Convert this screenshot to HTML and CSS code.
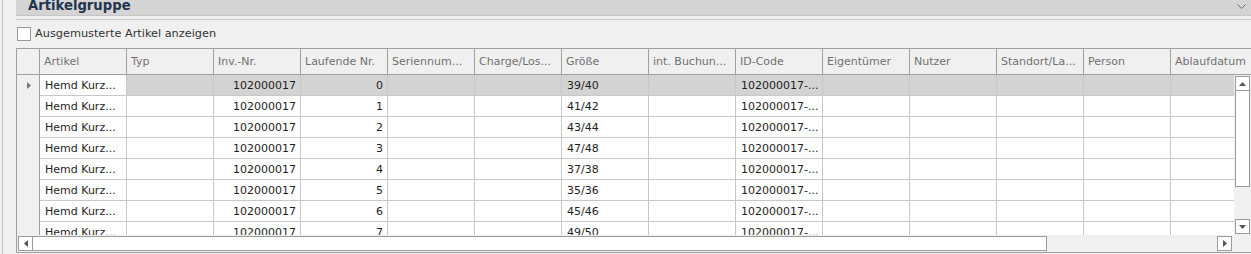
FILE: index.html
```html
<!DOCTYPE html>
<html lang="de">
<head>
  <meta charset="UTF-8" />
  <title>Artikelgruppe</title>
  <link rel="stylesheet" href="styles.css">
</head>
<body>
  <div class="frame">

    <!-- Group header -->
    <div class="group-bar">
      <span class="group-title">Artikelgruppe</span>
      <svg class="chevron" width="9" height="5" viewBox="0 0 9 5"><path d="M0.5 0.5 L4.5 4.5 L8.5 0.5" fill="none" stroke="#6a6a6a" stroke-width="1"/></svg>
    </div>
    <div class="group-line"></div>

    <!-- Filter -->
    <label class="check-row">
      <span class="check-box"></span>
      <span>Ausgemusterte Artikel anzeigen</span>
    </label>

    <!-- Grid -->
    <div class="grid">
      <div class="grid-head">
        <div class="row-head"></div>
        <div class="hcell">Artikel</div>
        <div class="hcell">Typ</div>
        <div class="hcell">Inv.-Nr.</div>
        <div class="hcell">Laufende Nr.</div>
        <div class="hcell">Seriennum...</div>
        <div class="hcell">Charge/Los...</div>
        <div class="hcell">Größe</div>
        <div class="hcell">int. Buchun...</div>
        <div class="hcell">ID-Code</div>
        <div class="hcell">Eigentümer</div>
        <div class="hcell">Nutzer</div>
        <div class="hcell">Standort/La...</div>
        <div class="hcell">Person</div>
        <div class="hcell">Ablaufdatum</div>
      </div>

      <div class="grid-mid">
        <div class="rows" id="rows"></div>
        <div class="vscroll">
          <div class="sbtn"><svg width="7" height="4" viewBox="0 0 7 4"><path d="M0 4 L3.5 0 L7 4 Z" fill="#555"/></svg></div>
          <div class="vthumb"></div>
          <div class="vtrack"></div>
          <div class="sbtn"><svg width="7" height="4" viewBox="0 0 7 4"><path d="M0 0 L3.5 4 L7 0 Z" fill="#555"/></svg></div>
        </div>
      </div>

      <div class="hscroll">
        <div class="sbtn"><svg width="4" height="7" viewBox="0 0 4 7"><path d="M4 0 L0 3.5 L4 7 Z" fill="#555"/></svg></div>
        <div class="hthumb"></div>
        <div class="htrack"></div>
        <div class="sbtn"><svg width="4" height="7" viewBox="0 0 4 7"><path d="M0 0 L4 3.5 L0 7 Z" fill="#555"/></svg></div>
        <div class="corner"></div>
      </div>
    </div>

  </div>

  <script>
    const sizes = ["39/40", "41/42", "43/44", "47/48", "37/38", "35/36", "45/46", "49/50"];
    const rowsEl = document.getElementById("rows");

    sizes.forEach((size, i) => {
      const row = document.createElement("div");
      row.className = "row" + (i === 0 ? " selected" : "");

      const cells = [
        ["Hemd Kurz...", "focus"], ["", ""], ["102000017", "num"], [String(i), "num"],
        ["", ""], ["", ""], [size, ""], ["", ""], ["102000017-...", ""],
        ["", ""], ["", ""], ["", ""], ["", ""], ["", ""]
      ];

      let html = '<div class="row-head">' +
        (i === 0 ? '<svg width="4" height="7" viewBox="0 0 4 7"><path d="M0 0 L4 3.5 L0 7 Z" fill="#777"/></svg>' : '') +
        '</div>';
      cells.forEach(([text, cls]) => {
        html += '<div class="cell ' + cls + '">' + text + '</div>';
      });
      row.innerHTML = html;
      rowsEl.appendChild(row);
    });
  </script>
</body>
</html>
```

FILE: styles.css
```css
* {
  margin: 0;
  padding: 0;
  box-sizing: border-box;
}

body {
  font-family: 'DejaVu Sans', sans-serif;
  font-size: 11px;
  background: #f0f0f0;
  color: #1e1e1e;
  width: 1251px;
  height: 254px;
  overflow: hidden;
}

.frame {
  margin-left: 2px;
  border-left: 1px solid #c2c2c2;
  padding-left: 13px;
  height: 254px;
}

/* Group header */
.group-bar {
  height: 16px;
  background: #d4d4d4;
  border-bottom: 1px solid #c6c6c6;
  display: flex;
  align-items: flex-start;
  justify-content: space-between;
  padding: 0 5px 0 12px;
  overflow: hidden;
}

.group-title {
  font-size: 13.2px;
  font-weight: bold;
  color: #22354f;
  line-height: 12px;
}

.chevron {
  margin-top: 4px;
}

.group-line {
  margin-top: 3px;
  height: 1px;
  background: #cbcbcb;
}

/* Filter checkbox */
.check-row {
  display: flex;
  align-items: center;
  gap: 4px;
  height: 28px;
  padding: 0 0 1px 1px;
  color: #333;
  font-size: 11.3px;
}

.check-box {
  width: 14px;
  height: 14px;
  background: #fff;
  border: 1px solid #999;
}

/* Grid */
.grid {
  border-top: 1px solid #a0a0a0;
  border-left: 1px solid #a0a0a0;
  border-bottom: 1px solid #a0a0a0;
  height: 205px;
  overflow: hidden;
}

.grid-head {
  display: flex;
  height: 26px;
  border-bottom: 1px solid #a0a0a0;
  overflow: hidden;
  color: #707070;
}

.row-head {
  flex: 0 0 23px;
  border-right: 1px solid #a0a0a0;
  background: #f0f0f0;
  display: flex;
  align-items: center;
  justify-content: center;
  padding-left: 1px;
}

.hcell {
  flex: 0 0 87px;
  border-right: 1px solid #a0a0a0;
  padding: 0 4px 0 4px;
  display: flex;
  align-items: center;
  white-space: nowrap;
  overflow: hidden;
}

.grid-mid {
  display: flex;
  height: 160px;
}

.rows {
  flex: 1;
  overflow: hidden;
}

.row {
  display: flex;
  height: 21px;
}

.cell {
  flex: 0 0 87px;
  height: 21px;
  background: #fff;
  border-right: 1px solid #c8c8c8;
  border-bottom: 1px solid #c8c8c8;
  padding: 1px 4px 0 5px;
  display: flex;
  align-items: center;
  white-space: nowrap;
  overflow: hidden;
}

.cell.num {
  justify-content: flex-end;
}

.row.selected .cell {
  background: #d3d3d3;
}

.row.selected .cell.focus {
  background: #fff;
}

/* Scrollbars */
.vscroll {
  flex: 0 0 17px;
  display: flex;
  flex-direction: column;
  align-items: center;
  padding: 1px 0;
  background: #f0f0f0;
}

.sbtn {
  flex: 0 0 15px;
  width: 15px;
  height: 15px;
  background: #fff;
  border: 1px solid #9a9a9a;
  display: flex;
  align-items: center;
  justify-content: center;
}

.vthumb {
  width: 15px;
  height: 96px;
  background: #fff;
  border: 1px solid #9a9a9a;
  border-top: none;
}

.vtrack {
  flex: 1;
}

.hscroll {
  display: flex;
  height: 17px;
  align-items: center;
  background: #f0f0f0;
}

.hscroll .sbtn {
  margin-left: 1px;
}

.hthumb {
  width: 1014px;
  height: 15px;
  background: #fff;
  border: 1px solid #9a9a9a;
  border-left: none;
}

.htrack {
  flex: 1;
}

.corner {
  flex: 0 0 19px;
}
```
